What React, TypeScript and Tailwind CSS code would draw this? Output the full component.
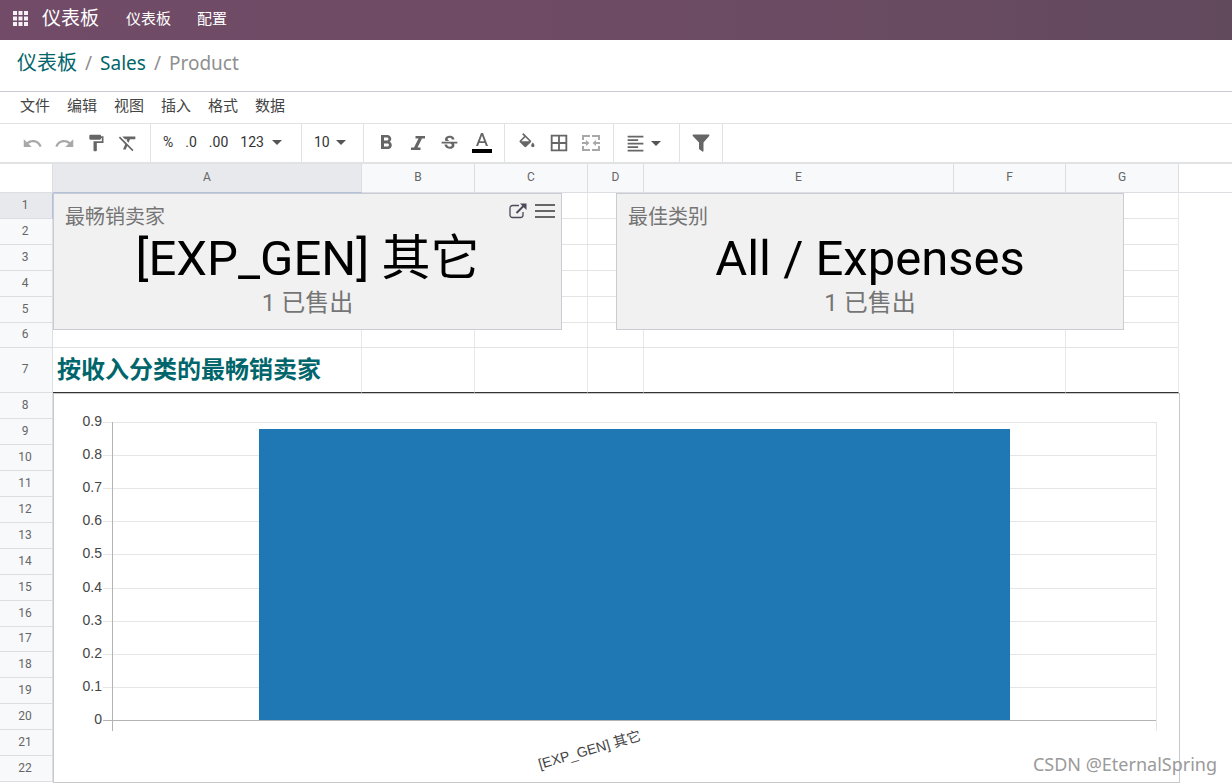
import type { ReactNode } from "react";
import {
  MdBorderAll,
  MdFormatAlignLeft,
  MdFormatBold,
  MdFormatClear,
  MdFormatPaint,
  MdRedo,
  MdStrikethroughS,
  MdUndo,
} from "react-icons/md";

const MENUS = ["文件", "编辑", "视图", "插入", "格式", "数据"];

const COLUMNS = [
  { name: "A", width: 309 },
  { name: "B", width: 113 },
  { name: "C", width: 113 },
  { name: "D", width: 56 },
  { name: "E", width: 310 },
  { name: "F", width: 112 },
  { name: "G", width: 113 },
];

const ROWS = Array.from({ length: 22 }, (_, i) => i + 1);

const TICKS = ["0.9", "0.8", "0.7", "0.6", "0.5", "0.4", "0.3", "0.2", "0.1", "0"];

function rowHeight(row: number) {
  if (row === 7) return "h-[45px]";
  if (row === 6 || row === 17) return "h-[25px]";
  return "h-[26px]";
}

function Caret() {
  return (
    <svg width="10" height="5" viewBox="0 0 10 5" fill="#555555" aria-hidden="true">
      <path d="M0 0h10L5 5z" />
    </svg>
  );
}

function ItalicIcon() {
  return (
    <svg width="14" height="14" viewBox="0 0 14 14" fill="currentColor" aria-hidden="true">
      <path d="M4.500 0H14v2.500h-3L6.500 11.500h3V14H0v-2.500h3L7.500 2.500h-3z" />
    </svg>
  );
}

function BucketIcon() {
  return (
    <svg width="20" height="20" viewBox="0 0 24 24" fill="currentColor" aria-hidden="true">
      <path d="M16.560 8.940L7.620 0 6.210 1.410l2.380 2.380-5.150 5.150a1.490 1.490 0 0 0 0 2.120l5.500 5.500c.290.290.680.440 1.060.440s.770-.150 1.060-.440l5.500-5.500c.590-.580.590-1.530 0-2.120zM5.210 10L10 5.210 14.790 10zM19 11.500s-2 2.170-2 3.500c0 1.100.900 2 2 2s2-.900 2-2c0-1.330-2-3.500-2-3.500z" />
    </svg>
  );
}

function MergeIcon() {
  return (
    <svg width="18" height="16" viewBox="0 0 18 16" fill="none" stroke="currentColor" strokeWidth="2" aria-hidden="true">
      <path d="M1 5V1h7M10 1h7v4M1 11v4h7M10 15h7v-4" />
      <path d="M0 8h5M18 8h-5" />
      <path d="M4 5l3.500 3L4 11zM14 5l-3.500 3 3.500 3z" fill="currentColor" stroke="none" />
    </svg>
  );
}

function FilterIcon() {
  return (
    <svg width="18" height="18" viewBox="0 0 18 18" fill="currentColor" aria-hidden="true">
      <path d="M1 0.500h16q.8.600.2 1.500L11.500 8.500V17q-.4.900-1.200.600L7 15V8.500L.8 2Q.2 1.100 1 .5z" />
    </svg>
  );
}

function ExternalIcon() {
  return (
    <svg width="18" height="16" viewBox="0 0 18 16" fill="none" stroke="#4a4a5a" aria-hidden="true">
      <path d="M10 2.500H3.500a2.500 2.500 0 0 0-2.500 2.500v7a2.500 2.500 0 0 0 2.500 2.500h8a2.500 2.500 0 0 0 2.500-2.500V9" strokeWidth="1.300" />
      <path d="M7.500 10L15 2.500" strokeWidth="2" />
      <path d="M11 .5h6.500V7z" fill="#4a4a5a" stroke="none" />
    </svg>
  );
}

function ToolGroup({ className = "px-[6px]", children }: { className?: string; children: ReactNode }) {
  return <div className={`flex items-center border-r border-[#e0e2e4] ${className}`}>{children}</div>;
}

function Tool({ label, muted, children }: { label: string; muted?: boolean; children: ReactNode }) {
  return (
    <button
      type="button"
      aria-label={label}
      className={`flex h-8 w-8 items-center justify-center ${muted ? "text-[#a8a8a8]" : "text-[#666666]"}`}
    >
      {children}
    </button>
  );
}

function Toolbar() {
  return (
    <div className="flex h-10 border-b-2 border-[#e0e2e4] font-[Roboto,sans-serif] text-sm text-[#333333]">
      <ToolGroup className="pr-[6px] pl-4">
        <Tool label="撤消" muted>
          <MdUndo size={21} />
        </Tool>
        <Tool label="重做" muted>
          <MdRedo size={21} />
        </Tool>
        <Tool label="格式刷">
          <MdFormatPaint size={20} />
        </Tool>
        <Tool label="清除格式">
          <MdFormatClear size={22} />
        </Tool>
      </ToolGroup>
      <ToolGroup className="gap-3 pr-[19px] pb-[2px] pl-3">
        <button type="button">%</button>
        <button type="button">.0</button>
        <button type="button">.00</button>
        <button type="button" className="flex items-center gap-2">
          123 <Caret />
        </button>
      </ToolGroup>
      <ToolGroup className="pr-[17px] pb-[2px] pl-3">
        <button type="button" className="flex items-center gap-[6px]">
          10 <Caret />
        </button>
      </ToolGroup>
      <ToolGroup>
        <Tool label="粗体">
          <MdFormatBold size={24} />
        </Tool>
        <Tool label="斜体">
          <ItalicIcon />
        </Tool>
        <Tool label="删除线">
          <MdStrikethroughS size={21} />
        </Tool>
        <Tool label="文字颜色">
          <svg width="20" height="22" viewBox="0 0 20 22" fill="currentColor" aria-hidden="true">
            <path d="M9 1L4 14h2.100l1.100-3h5.600l1.100 3H16L11 1zM7.900 9.200L10 3.400l2.100 5.800z" />
            <path d="M0 17h20v4H0z" fill="#000000" />
          </svg>
        </Tool>
      </ToolGroup>
      <ToolGroup>
        <Tool label="填充颜色">
          <BucketIcon />
        </Tool>
        <Tool label="边框">
          <MdBorderAll size={22} />
        </Tool>
        <Tool label="合并单元格" muted>
          <MergeIcon />
        </Tool>
      </ToolGroup>
      <ToolGroup className="pr-[18px] pl-[11px]">
        <button type="button" aria-label="对齐" className="flex items-center gap-[5px] text-[#666666]">
          <MdFormatAlignLeft size={21} />
          <Caret />
        </button>
      </ToolGroup>
      <ToolGroup className="px-[5px]">
        <Tool label="筛选">
          <FilterIcon />
        </Tool>
      </ToolGroup>
    </div>
  );
}

function Grid() {
  return (
    <table className="w-[1179px] table-fixed border-separate border-spacing-0 font-[Roboto,sans-serif] text-xs text-[#666666]">
      <colgroup>
        <col className="w-[53px]" />
        {COLUMNS.map((col) => (
          <col key={col.name} style={{ width: col.width }} />
        ))}
      </colgroup>
      <thead>
        <tr className="h-[29px]">
          <td className="border-r border-b border-[#dcdee1]" />
          {COLUMNS.map((col) => (
            <th
              key={col.name}
              scope="col"
              className={`border-r border-b p-0 pb-[3px] font-normal ${
                col.name === "A" ? "border-r-[#dcdee1] border-b-[#b3c0dc] bg-[#e7e9ed]" : "border-[#dcdee1] bg-[#f8f9fb]"
              }`}
            >
              {col.name}
            </th>
          ))}
        </tr>
      </thead>
      <tbody>
        {ROWS.map((row) => (
          <tr key={row} className={rowHeight(row)}>
            <th
              scope="row"
              className={`border-r border-b p-0 pr-[2px] pb-[2px] leading-4 font-normal ${
                row === 1 ? "border-r-[#b3c0dc] border-b-[#dcdee1] bg-[#e7e9ed]" : "border-[#dcdee1] bg-[#f8f9fb]"
              }`}
            >
              {row}
            </th>
            {COLUMNS.map((col) => (
              <td
                key={col.name}
                className={`border-r border-b border-r-[#e8e8e8] p-0 ${row === 7 ? "border-b-[#333333]" : "border-b-[#e4e4e4]"}`}
              >
                {row === 7 && col.name === "A" && (
                  <div className="pb-1 pl-1 font-['Noto_Sans_CJK_SC',sans-serif] text-2xl leading-8 font-bold whitespace-nowrap text-[#01666b]">
                    按收入分类的最畅销卖家
                  </div>
                )}
              </td>
            ))}
          </tr>
        ))}
      </tbody>
    </table>
  );
}

function Scorecard({ title, value, note, className }: { title: string; value: string; note: string; className: string }) {
  return (
    <section
      className={`absolute top-[29px] h-[137px] border border-[#c9ccd2] bg-[#f1f1f1] pt-[11px] text-center font-[Roboto,'Noto_Sans_CJK_SC',sans-serif] ${className}`}
    >
      <h2 className="px-[11px] text-left text-xl leading-6 text-[#757575]">{title}</h2>
      <p className="text-[49px] leading-[60px] text-black">{value}</p>
      <p className="text-2xl leading-7 text-[#757575]">{note}</p>
    </section>
  );
}

function BarChart() {
  return (
    <figure className="absolute top-[229px] left-[53px] w-[1127px] border border-[#c9c9cd] bg-white">
      <svg viewBox="0 0 1125 388" className="block w-full" role="img" aria-label="按收入分类的最畅销卖家">
        {TICKS.map((tick, i) => {
          const y = 28.5 + Math.round(i * 33.1);
          return (
            <g key={tick}>
              <line x1="49" x2="1102" y1={y} y2={y} stroke={tick === "0" ? "#b3b3b3" : "#e6e6e6"} />
              <text x="48" y={y + 3.5} textAnchor="end" fontSize="14" fill="#444444" fontFamily="'Liberation Sans', sans-serif">
                {tick}
              </text>
            </g>
          );
        })}
        <line x1="1102.500" x2="1102.500" y1="28" y2="337" stroke="#e6e6e6" />
        <line x1="58.500" x2="58.500" y1="28" y2="337" stroke="#b3b3b3" />
        <rect x="205" y="35" width="751" height="291" fill="#1f77b4" />
        <text
          transform="translate(486 375) rotate(-16)"
          fontSize="14"
          fill="#444444"
          fontFamily="'Liberation Sans', 'Noto Sans CJK SC', sans-serif"
        >
          [EXP_GEN] 其它
        </text>
      </svg>
    </figure>
  );
}

export default function App() {
  return (
    <div className="relative h-screen overflow-hidden bg-white font-['Noto_Sans','Noto_Sans_CJK_SC',sans-serif]">
      <header className="flex h-10 items-center bg-linear-to-r from-[#714b67] via-[#6e4b65] to-[#624a5d] pb-1 pl-[13px] text-[15px] text-white">
        <button type="button" aria-label="应用" className="mr-[14px]">
          <svg width="15" height="15" viewBox="0 0 15 15" fill="#f5f1f4" aria-hidden="true">
            <path d="M0 0h4v4H0zM5.500 0h4v4h-4zM11 0h4v4h-4zM0 5.500h4v4H0zM5.500 5.500h4v4h-4zM11 5.500h4v4h-4zM0 11h4v4H0zM5.500 11h4v4h-4zM11 11h4v4h-4z" />
          </svg>
        </button>
        <a href="#" className="mr-[27px] text-[19px]">
          仪表板
        </a>
        <nav className="flex gap-[26px]">
          <a href="#">仪表板</a>
          <a href="#">配置</a>
        </nav>
      </header>

      <nav
        aria-label="breadcrumb"
        className="flex h-[52px] items-center gap-2 border-b border-[#c9ccd2] pb-[5px] pl-[17px] text-[19px] text-[#8f8f8f]"
      >
        <a href="#" className="text-xl text-[#01666b]">
          仪表板
        </a>
        <span>/</span>
        <a href="#" className="text-[#01666b]">
          Sales
        </a>
        <span>/</span>
        <span>Product</span>
      </nav>

      <div className="flex h-8 items-center gap-[17px] border-b border-[#e0e2e4] pb-[5px] pl-5 text-[15px] text-[#444444]">
        {MENUS.map((menu) => (
          <button key={menu} type="button">
            {menu}
          </button>
        ))}
      </div>

      <Toolbar />

      <main className="relative">
        <div className="h-[29px] border-b border-[#dcdee1]" />
        <div className="-mt-[29px]">
          <Grid />
        </div>
        <Scorecard title="最畅销卖家" value="[EXP_GEN] 其它" note="1 已售出" className="left-[53px] w-[509px]" />
        <Scorecard title="最佳类别" value="All / Expenses" note="1 已售出" className="left-[616px] w-[508px]" />
        <div className="absolute top-[39px] left-[509px] flex items-center gap-2">
          <button type="button" aria-label="打开">
            <ExternalIcon />
          </button>
          <button type="button" aria-label="菜单">
            <svg width="20" height="14" viewBox="0 0 20 14" fill="#666666" aria-hidden="true">
              <path d="M0 0h20v2H0zM0 6h20v2H0zM0 12h20v2H0z" />
            </svg>
          </button>
        </div>
        <BarChart />
      </main>

      <p className="absolute right-[15px] bottom-2 text-lg leading-6 text-[#9a9a9a]">CSDN @EternalSpring</p>
    </div>
  );
}
